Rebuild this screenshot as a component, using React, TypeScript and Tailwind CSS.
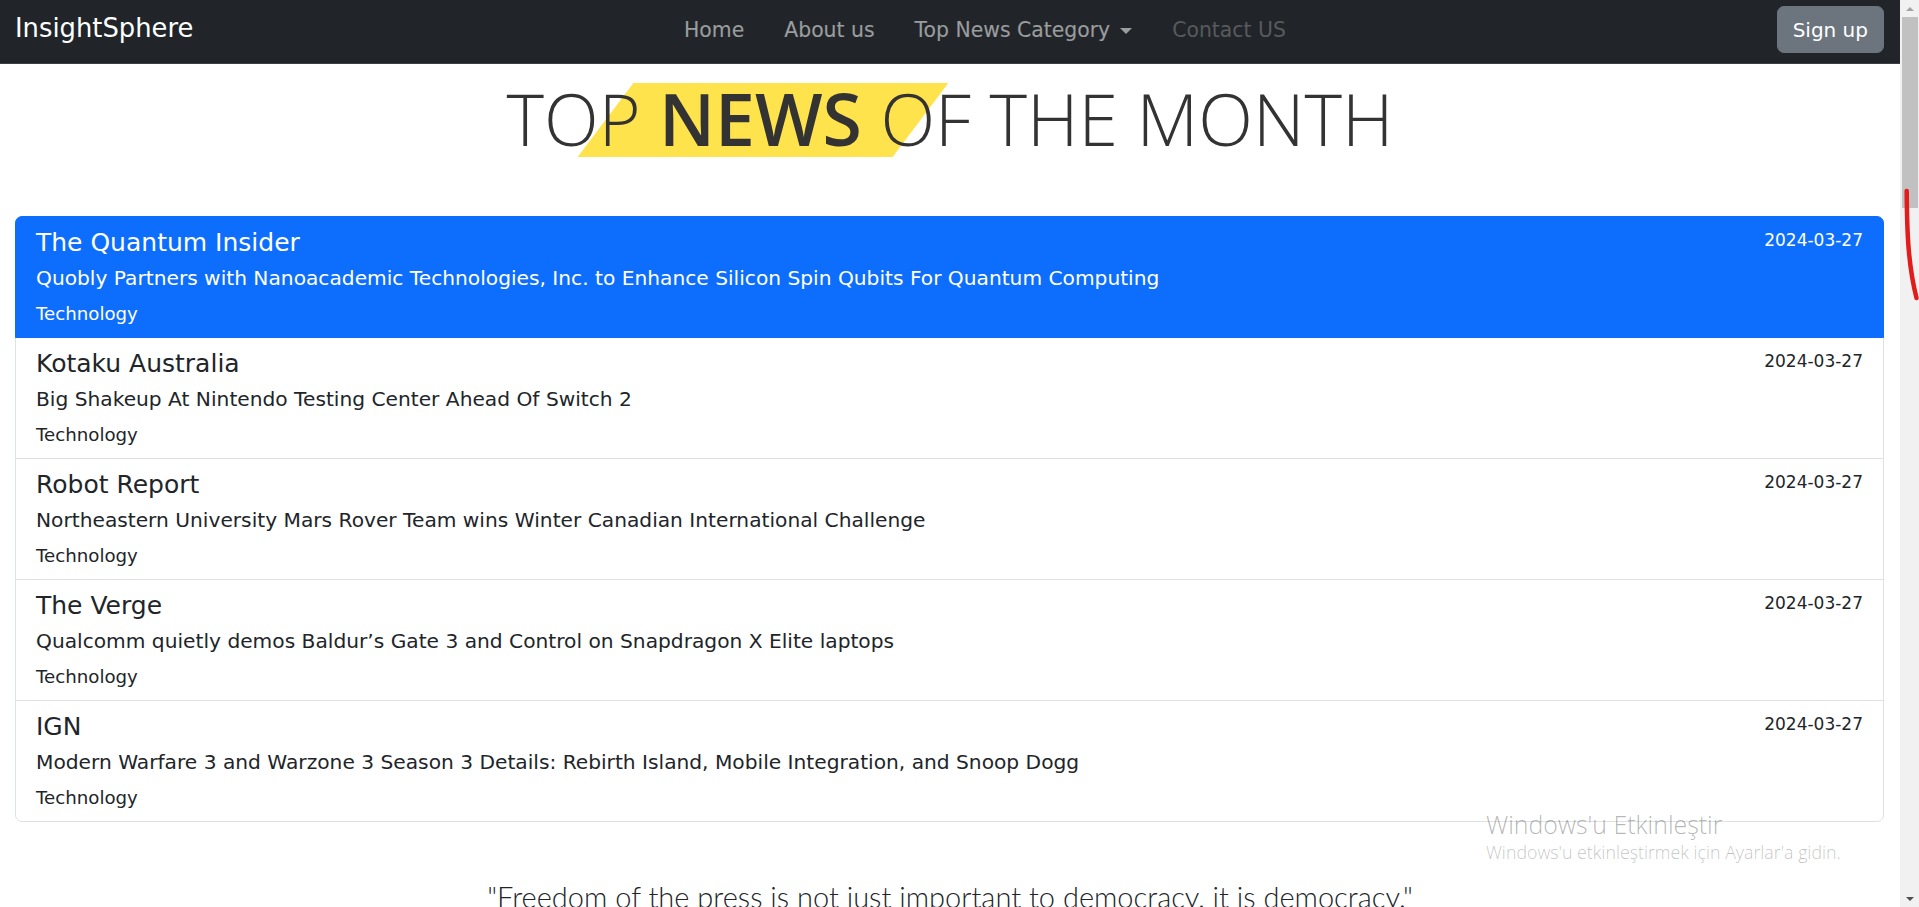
const news = [
  {
    source: 'The Quantum Insider',
    title: 'Quobly Partners with Nanoacademic Technologies, Inc. to Enhance Silicon Spin Qubits For Quantum Computing',
  },
  { source: 'Kotaku Australia', title: 'Big Shakeup At Nintendo Testing Center Ahead Of Switch 2' },
  {
    source: 'Robot Report',
    title: 'Northeastern University Mars Rover Team wins Winter Canadian International Challenge',
  },
  {
    source: 'The Verge',
    title: 'Qualcomm quietly demos Baldur’s Gate 3 and Control on Snapdragon X Elite laptops',
  },
  {
    source: 'IGN',
    title: 'Modern Warfare 3 and Warzone 3 Season 3 Details: Rebirth Island, Mobile Integration, and Snoop Dogg',
  },
];

function NewsItem({ source, title, index }: { source: string; title: string; index: number }) {
  const active = index === 0;
  const last = index === news.length - 1;
  return (
    <div
      className={`flex h-[122px] justify-between border px-[20px] pt-[10px] ${
        active ? 'relative z-10 rounded-t-[7px] border-[#0d6efd] bg-[#0d6efd] text-white' : '-mt-px border-[#dee2e6]'
      } ${last ? 'rounded-b-[7px]' : ''}`}
    >
      <div>
        <h5 className="mt-px text-[25px] leading-[30px]">{source}</h5>
        <p className="mt-[5px] text-[20.2px] leading-[30px]">{title}</p>
        <small className="mt-[8px] block text-[18.2px] leading-[26px]">Technology</small>
      </div>
      <small className="text-[17px] leading-[26px]">2024-03-27</small>
    </div>
  );
}

export default function App() {
  return (
    <div className="flex h-screen w-full overflow-hidden bg-white font-['DejaVu_Sans',sans-serif] text-[#212529]">
      <div className="relative flex-1 overflow-hidden">
        <nav className="flex h-16 items-start border-b border-[#3a3f44] bg-[#212529] pl-[15px] pr-[16px]">
          <a className="mr-[20px] mt-[13px] text-[25.8px] leading-[30px] text-white">InsightSphere</a>
          <ul className="mt-[15px] flex flex-1 justify-center pr-[20px] text-[20.4px] leading-[30px]">
            <li className="px-[20px] text-white/55">Home</li>
            <li className="px-[20px] text-white/55">About us</li>
            <li className="flex items-center px-[20px] text-white/55">
              Top News Category
              <span className="ml-[10px] mt-[2px] inline-block border-x-[6px] border-t-[6px] border-x-transparent border-t-current" />
            </li>
            <li className="px-[20px] text-white/25">Contact US</li>
          </ul>
          <button className="mt-[6px] rounded-[7px] border border-[#6c757d] bg-[#6c757d] px-[15px] py-[7.5px] text-[20px] leading-[30px] text-white">
            Sign up
          </button>
        </nav>

        <h1 className="isolate pt-[14px] text-center font-['Open_Sans',sans-serif] text-[71.5px] font-light leading-[82px] text-[#333]">
          TOP{' '}
          <span className="relative inline-block font-semibold">
            NEWS
            <span className="absolute left-1/2 top-[5px] -z-10 ml-[2px] h-[74px] w-[315px] -translate-x-1/2 skew-x-[-37deg] bg-[#ffe34d]" />
          </span>{' '}
          OF THE MONTH
        </h1>

        <div className="ml-[15px] mr-[16px] mt-[56px]">
          {news.map((n, i) => (
            <NewsItem key={n.source} source={n.source} title={n.title} index={i} />
          ))}
        </div>

        <p className="mt-[60px] text-center font-['Lato',sans-serif] text-[29px] font-light leading-[30px] text-[#212529]">
          "Freedom of the press is not just important to democracy, it is democracy."
        </p>

        {/* windows activation watermark */}
        <div className="pointer-events-none absolute left-[1486px] top-[808px] font-['Open_Sans',sans-serif] font-light">
          <div className="text-[24.9px] leading-[32px] text-black/30">Windows'u Etkinleştir</div>
          <div className="text-[17.8px] leading-[24px] text-black/25">Windows'u etkinleştirmek için Ayarlar'a gidin.</div>
        </div>
      </div>

      {/* fake scrollbar */}
      <div className="relative flex w-[19px] flex-col bg-[#f1f1f1]">
        <div className="flex h-[17px] items-center justify-center">
          <span className="border-x-[4px] border-b-[4px] border-x-transparent border-b-[#a3a3a3]" />
        </div>
        <div className="ml-[2px] mr-[1px] h-[191px] bg-[#c1c1c1]" />
        <div className="flex-1" />
        <div className="flex h-[17px] items-center justify-center">
          <span className="border-x-[4px] border-t-[4px] border-x-transparent border-t-[#505050]" />
        </div>
        <svg className="pointer-events-none absolute left-0 top-0 h-full w-[19px]" viewBox="0 0 19 907" preserveAspectRatio="none">
          <path d="M6.7 191 C7 232 8 264 16.5 298" fill="none" stroke="#e21b1b" strokeWidth="4.5" strokeLinecap="round" />
        </svg>
      </div>
    </div>
  );
}
